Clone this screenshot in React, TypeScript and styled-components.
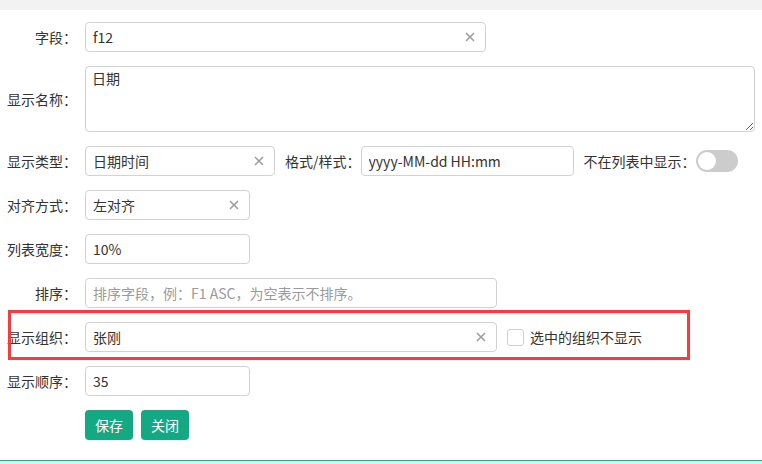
import React from "react";
import styled, { createGlobalStyle } from "styled-components";

const GlobalStyle = createGlobalStyle`
  html, body {
    margin: 0;
    padding: 0;
    background: #fff;
  }
  body {
    font-family: "Microsoft YaHei", "Noto Sans CJK SC", "Noto Sans", sans-serif;
    font-size: 14px;
    color: #333;
  }
`;

const Page = styled.div`
  width: 762px;
  height: 464px;
  display: flex;
  flex-direction: column;
  overflow: hidden;
`;

const Header = styled.div`
  height: 10px;
  background: #f2f2f2;
  overflow: hidden;
  display: flex;
  align-items: flex-end;
`;

const Title = styled.span`
  font-size: 14px;
  line-height: 14px;
  margin-bottom: 12px;
  color: #333;
  white-space: nowrap;
`;

const Form = styled.div`
  flex: 1;
  padding-top: 12px;
  display: flex;
  flex-direction: column;
  gap: 14px;
`;

const Row = styled.div`
  position: relative;
  display: flex;
  align-items: center;
`;

const Label = styled.label<{ $inline?: boolean }>`
  width: ${(p) => (p.$inline ? "auto" : "77px")};
  margin-right: ${(p) => (p.$inline ? "0" : "8px")};
  text-align: right;
  white-space: nowrap;
  line-height: 20px;
  color: #333;
`;

const Field = styled.div<{ $width: number; $gapRight?: number }>`
  box-sizing: border-box;
  width: ${(p) => p.$width}px;
  height: 30px;
  border: 1px solid #d2d2d2;
  border-radius: 4px;
  background: #fff;
  display: flex;
  align-items: center;
  padding: 0 10px 0 7px;
  margin-right: ${(p) => p.$gapRight ?? 0}px;
`;

const Value = styled.span<{ $placeholder?: boolean }>`
  flex: 1;
  color: ${(p) => (p.$placeholder ? "#9a9a9a" : "#333")};
  white-space: nowrap;
  overflow: hidden;
`;

const Area = styled.textarea`
  box-sizing: border-box;
  width: 670px;
  height: 66px;
  border: 1px solid #d2d2d2;
  border-radius: 4px;
  padding: 1px 6px;
  font: inherit;
  color: #333;
  outline: none;
`;

const Switch = styled.span`
  display: inline-flex;
  align-items: center;
  box-sizing: border-box;
  width: 42px;
  height: 22px;
  border-radius: 11px;
  background: #cccccc;
  padding: 2px;
  &::before {
    content: "";
    width: 18px;
    height: 18px;
    border-radius: 50%;
    background: #fff;
  }
`;

const Check = styled.span`
  box-sizing: border-box;
  width: 17px;
  height: 17px;
  border: 1px solid #cfcfcf;
  border-radius: 3px;
  background: #fff;
  margin: 0 6px 0 10px;
`;

const Highlight = styled.div`
  position: absolute;
  left: 8px;
  top: -12px;
  width: 682px;
  height: 50px;
  box-sizing: border-box;
  border: 3px solid #f63c3c;
  pointer-events: none;
`;

const Buttons = styled.div`
  display: flex;
  gap: 8px;
  padding-left: 85px;
`;

const Button = styled.button`
  height: 30px;
  padding: 0 10px;
  border: none;
  border-radius: 4px;
  background: #14a883;
  color: #fff;
  font: inherit;
  font-size: 14px;
`;

const Footer = styled.div`
  height: 3px;
  border-top: 1px solid #1cb38d;
  background: #ebebeb;
`;

const Clear = () => (
  <svg width="10" height="10" viewBox="0 0 10 10">
    <path d="M1 1 L9 9 M9 1 L1 9" stroke="#9b9b9b" strokeWidth="1.5" />
  </svg>
);

const App = () => {
  return (
    <Page>
      <GlobalStyle />
      <Header>
        <Title>▪ 编辑字段属性</Title>
      </Header>
      <Form>
        <Row>
          <Label>字段：</Label>
          <Field $width={401}>
            <Value>f12</Value>
            <Clear />
          </Field>
        </Row>
        <Row>
          <Label>显示名称：</Label>
          <Area readOnly value="日期" />
        </Row>
        <Row>
          <Label>显示类型：</Label>
          <Field $width={190} $gapRight={10}>
            <Value>日期时间</Value>
            <Clear />
          </Field>
          <Label $inline>格式/样式：</Label>
          <Field $width={213} $gapRight={10}>
            <Value>yyyy-MM-dd HH:mm</Value>
          </Field>
          <Label $inline>不在列表中显示：</Label>
          <Switch />
        </Row>
        <Row>
          <Label>对齐方式：</Label>
          <Field $width={165}>
            <Value>左对齐</Value>
            <Clear />
          </Field>
        </Row>
        <Row>
          <Label>列表宽度：</Label>
          <Field $width={165}>
            <Value>10%</Value>
          </Field>
        </Row>
        <Row>
          <Label>排序：</Label>
          <Field $width={412}>
            <Value $placeholder>排序字段，例：F1 ASC，为空表示不排序。</Value>
          </Field>
        </Row>
        <Row>
          <Label>显示组织：</Label>
          <Field $width={412}>
            <Value>张刚</Value>
            <Clear />
          </Field>
          <Check />
          <span>选中的组织不显示</span>
          <Highlight />
        </Row>
        <Row>
          <Label>显示顺序：</Label>
          <Field $width={165}>
            <Value>35</Value>
          </Field>
        </Row>
        <Buttons>
          <Button>保存</Button>
          <Button>关闭</Button>
        </Buttons>
      </Form>
      <Footer />
    </Page>
  );
};

export default App;
